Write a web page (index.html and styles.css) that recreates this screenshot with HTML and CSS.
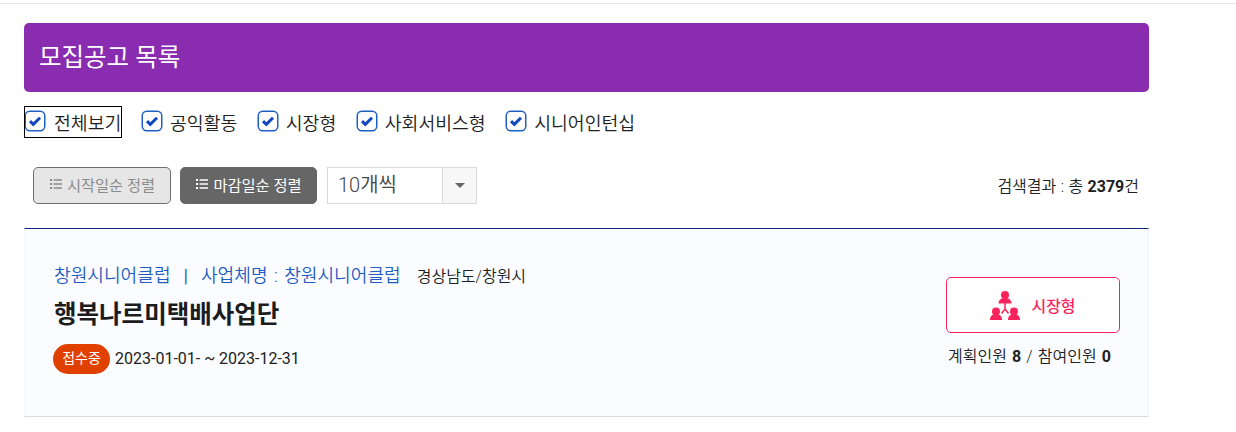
FILE: index.html
```html
<!DOCTYPE html>
<html lang="ko">
<head>
<meta charset="utf-8">
<title>모집공고 목록</title>
<link rel="stylesheet" href="styles.css">
</head>
<body>
<div class="topline"></div>
<main class="wrap">
  <h2 class="title">모집공고 목록</h2>
  <div class="filters">
    <label class="check focus"><svg class="box" viewBox="0 0 22 22"><rect x="1.250" y="1.250" width="19.500" height="19.500" rx="4.5"/><path d="M6 11.200l3.300 3.200 6.700-6.600"/></svg><span>전체보기</span></label>
    <label class="check"><svg class="box" viewBox="0 0 22 22"><rect x="1.250" y="1.250" width="19.500" height="19.500" rx="4.5"/><path d="M6 11.200l3.300 3.200 6.700-6.600"/></svg><span>공익활동</span></label>
    <label class="check"><svg class="box" viewBox="0 0 22 22"><rect x="1.250" y="1.250" width="19.500" height="19.500" rx="4.5"/><path d="M6 11.200l3.300 3.200 6.700-6.600"/></svg><span>시장형</span></label>
    <label class="check"><svg class="box" viewBox="0 0 22 22"><rect x="1.250" y="1.250" width="19.500" height="19.500" rx="4.5"/><path d="M6 11.200l3.300 3.200 6.700-6.600"/></svg><span>사회서비스형</span></label>
    <label class="check"><svg class="box" viewBox="0 0 22 22"><rect x="1.250" y="1.250" width="19.500" height="19.500" rx="4.5"/><path d="M6 11.200l3.300 3.200 6.700-6.600"/></svg><span>시니어인턴십</span></label>
  </div>
  <div class="toolbar">
    <button class="sort off"><svg class="list" viewBox="0 0 12 10"><path d="M0 0h2v2H0zM0 4h2v2H0zM0 8h2v2H0zM3.500 .3h8.500v1.400H3.500zM3.500 4.300h8.500v1.400H3.500zM3.500 8.300h8.500v1.400H3.500z"/></svg>시작일순 정렬</button>
    <button class="sort on"><svg class="list" viewBox="0 0 12 10"><path d="M0 0h2v2H0zM0 4h2v2H0zM0 8h2v2H0zM3.500 .3h8.500v1.400H3.500zM3.500 4.300h8.500v1.400H3.500zM3.500 8.300h8.500v1.400H3.500z"/></svg>마감일순 정렬</button>
    <div class="select"><span class="value">10개씩</span><span class="arrow"><i></i></span></div>
    <p class="total">검색결과 : 총 <b>2379</b>건</p>
  </div>
  <article class="card">
    <div class="info">
      <p class="org"><span class="blue">창원시니어클럽<span class="sep">|</span>사업체명 : 창원시니어클럽</span><span class="region">경상남도/창원시</span></p>
      <h3 class="name">행복나르미택배사업단</h3>
      <p class="dates"><span class="badge">접수중</span><span class="range">2023-01-01- ~ 2023-12-31</span></p>
    </div>
    <div class="side">
      <div class="type">
        <svg class="people" viewBox="0 0 30 29"><circle cx="15" cy="4" r="4"/><path d="M8.500 12.500c0-3.500 2.500-5.500 6.500-5.500s6.500 2 6.500 5.500z"/><circle cx="6" cy="20.500" r="4"/><path d="M0 29c0-3.500 2-6 6-6s6 2.500 6 6z"/><circle cx="24" cy="20.500" r="4"/><path d="M18 29c0-3.500 2-6 6-6s6 2.500 6 6z"/><path class="link" d="M15 12v6M15 18l-3.500 4.500M15 18l3.500 4.500"/></svg>
        <span>시장형</span>
      </div>
      <p class="count">계획인원 <b>8</b> / 참여인원 <b>0</b></p>
    </div>
  </article>
</main>
</body>
</html>
```
FILE: styles.css
```css
* { box-sizing: border-box; }
html, body { margin: 0; padding: 0; background: #fff; }
body {
  height: 432px;
  overflow: hidden;
  font-family: Roboto, "Noto Sans CJK KR", sans-serif;
  color: #212121;
  font-size: 16px;
}
p, h2, h3 { margin: 0; }
.topline { height: 4px; border-bottom: 1px solid #e6e6e6; }
.wrap { width: 1125px; margin-left: 24px; padding-top: 19px; }
.title {
  height: 69px;
  padding-left: 15px;
  background: #892cb0;
  border-radius: 5px;
  color: #fff;
  font-size: 24.500px;
  font-weight: 400;
  line-height: 70px;
}
.filters { display: flex; gap: 19.500px; margin-top: 14px; height: 32px; }
.check { display: flex; align-items: center; gap: 7px; font-size: 18.300px; font-weight: 350; color: #212121; height: 32px; }
.check.focus { outline: 1px solid #000; outline-offset: -1px; width: 98px; gap: 8px; margin-right: -0.500px; }
.box { width: 22px; height: 22px; flex: none; margin-top: -3px; }
.box rect { fill: #fff; stroke: #1f5fc0; stroke-width: 1.500; }
.box path { fill: none; stroke: #1048c0; stroke-width: 3; }
.toolbar { display: flex; align-items: center; margin-top: 29px; height: 37px; padding-left: 9px; padding-right: 10px; }
.sort {
  display: flex;
  align-items: center;
  justify-content: center;
  gap: 5px;
  height: 37px;
  border-radius: 5px;
  font-family: inherit;
  font-size: 15.300px;
  padding: 0 0 3px 1px;
}
.list { width: 12px; height: 10px; fill: currentColor; }
.off { width: 138px; background: #e6e6e6; border: 1px solid #6e6e6e; color: #8b8b8b; }
.on { width: 137px; margin-left: 9px; background: #666; border: 1px solid #666; color: #fff; }
.select {
  display: flex;
  width: 150px;
  height: 37px;
  margin-left: 10px;
  border: 1px solid #d9d9d9;
}
.value { flex: 1; padding-left: 10px; font-size: 20px; font-weight: 350; line-height: 35px; color: #444; }
.arrow { display: flex; align-items: center; justify-content: center; width: 34px; background: #f7f7f7; border-left: 1px solid #d9d9d9; }
.arrow i { width: 0; height: 0; border: 5px solid transparent; border-top-color: #666; border-bottom: 0; }
.total { margin-left: auto; margin-top: -2px; font-size: 16px; font-weight: 350; word-spacing: 0.500px; color: #212121; }
.total b, .count b { font-weight: 700; }
.card {
  display: flex;
  justify-content: space-between;
  height: 189px;
  margin-top: 24px;
  padding: 0 28px 0 29px;
  background: #fbfcff;
  border-top: 1px solid #0b2a80;
  border-bottom: 1px solid #d9dbe0;
  border-right: 1px solid #f2f3f7;
  border-left: 1px solid #f6f7fb;
}
.org { margin-top: 33px; font-size: 18.100px; font-weight: 350; line-height: 28px; white-space: nowrap; word-spacing: 2px; }
.blue { color: #1f5cc0; }
.sep { margin: 0 13px; font-weight: 400; }
.region { margin-left: 16px; font-size: 16px; color: #212121; }
.name { margin-top: 6px; font-size: 24.500px; line-height: 36px; font-weight: 700; color: #1c1c1c; }
.dates { display: flex; align-items: center; gap: 5px; margin-top: 11px; font-size: 16px; margin-left: -1px; }
.range { margin-top: -2px; }
.badge { width: 57px; height: 30px; border-radius: 15px; background: #e04000; color: #fff; font-size: 14px; font-weight: 400; line-height: 28px; text-align: center; }
.side { display: flex; flex-direction: column; align-items: center; width: 174px; margin-top: 48px; }
.type {
  display: flex;
  align-items: center;
  justify-content: center;
  gap: 11px;
  width: 174px;
  height: 56px;
  background: #fff;
  border: 1px solid #f9245c;
  border-radius: 5px;
  color: #f9245c;
  font-size: 16px;
  font-weight: 500;
}
.people { width: 30px; height: 29px; fill: #f9245c; }
.people .link { fill: none; stroke: #f9245c; stroke-width: 1.500; }
.count { margin-top: 12px; margin-right: 7px; font-size: 16px; font-weight: 350; word-spacing: 1.200px; line-height: 24px; }
```
